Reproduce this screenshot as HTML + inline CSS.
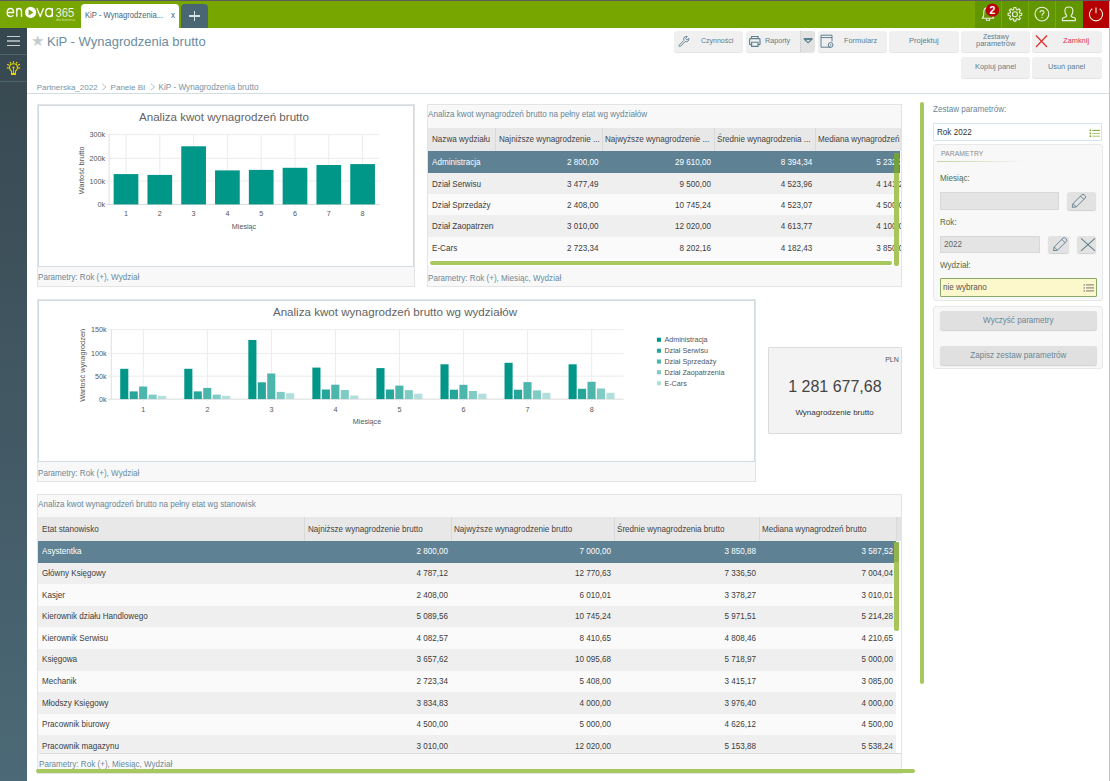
<!DOCTYPE html>
<html><head><meta charset="utf-8">
<style>
*{box-sizing:border-box;margin:0;padding:0}
html,body{width:1110px;height:781px;overflow:hidden;background:#fff;font-family:"Liberation Sans",sans-serif;position:relative}
.a{position:absolute}
.t{position:absolute;white-space:nowrap;line-height:1}
/* top bar */
#topline{left:0;top:0;width:1110px;height:1px;background:#5e5e5e}
#bar{left:0;top:1px;width:1110px;height:27px;background:#78a600}
#icons{left:975px;top:1px;width:108px;height:27px;background:#629600}
.sep{top:1px;width:1px;height:27px;background:#74aa0c}
#power{left:1083px;top:1px;width:26px;height:27px;background:#b50000}
#rline{left:1109px;top:1px;width:1px;height:780px;background:#c4c4c4}
#tab{left:81px;top:4px;width:98px;height:24px;background:#fff;border-radius:4px 4px 0 0}
#plus{left:181px;top:4px;width:27px;height:24px;background:#4b6673;border-radius:4px 4px 0 0}
/* sidebar */
#side{left:0;top:28px;width:27px;height:753px;background:linear-gradient(#37474f,#4c6977)}
.sline{left:0;width:27px;height:1px;background:#4c6470}
/* header */
#title{left:47px;top:35px;font-size:13px;color:#6d8ca0;font-family:"Liberation Sans",sans-serif}
.btn{position:absolute;height:21px;background:#f0f0f0;border-radius:3px;box-shadow:0 1px 0 #e4e4e4;color:#6b8797;font-size:7.4px;white-space:nowrap}
#hline{left:27px;top:93px;width:1082px;height:1px;background:#d3dee2}
.hb{font-size:8px;color:#5f7c8c;transform-origin:0 0}
.crumb{font-size:8px;color:#7b93a2}
</style></head><body>
<div id="topline" class="a"></div>
<div id="bar" class="a"></div>
<div id="icons" class="a"></div>
<div class="a sep" style="left:1001px"></div>
<div class="a sep" style="left:1028px"></div>
<div class="a sep" style="left:1055px"></div>
<div id="power" class="a"></div>
<div id="rline" class="a"></div>
<div id="tab" class="a"></div>
<div id="plus" class="a"></div>
<div id="side" class="a"></div>
<div class="a sline" style="top:54px"></div>
<div class="a sline" style="top:81px"></div>
<div id="hline" class="a"></div>
<!-- logo -->
<svg class="a" style="left:0;top:0" width="80" height="28" viewBox="0 0 80 28">
<g fill="none" stroke="#fff" stroke-width="1.35" stroke-linejoin="round">
<path d="M7.3 12.5 L13.6 12.5 Q13.6 8.5 10.4 8.5 Q7.2 8.5 7.2 12.5 Q7.2 16.5 10.5 16.5 Q12.4 16.5 13.4 15.4"/>
<path d="M16.8 8.2 L16.8 16.8 M16.8 11.4 Q16.8 8.5 19.2 8.5 Q21.5 8.5 21.5 11.4 L21.5 16.8"/>
<path d="M36.9 8.3 L40.2 16.6 L43.5 8.3"/>
<path d="M52.3 8.3 L52.3 16.8 M52.3 12.5 Q52.3 8.5 49 8.5 Q45.7 8.5 45.7 12.5 Q45.7 16.5 49 16.5 Q52.3 16.5 52.3 12.5"/>
</g>
<circle cx="30.6" cy="12.4" r="5.6" fill="#fff"/>
<path d="M28.6 9.2 L33.4 12.4 L28.6 15.6 Z" fill="#78a600"/>
<text x="55.6" y="16.6" font-family="Liberation Sans" font-size="12.2" fill="#fff" stroke="#78a600" stroke-width="0.15" textLength="18.8" lengthAdjust="spacingAndGlyphs">365</text>
<text x="56" y="21" font-family="Liberation Sans" font-size="2.6" fill="#cfe3a0" textLength="19" lengthAdjust="spacingAndGlyphs">dla biznesu</text>
</svg>
<div class="t" style="left:85px;top:11.1px;font-size:9px;color:#4d6272;transform:scaleX(0.85);transform-origin:0 0">KiP - Wynagrodzenia...</div>
<div class="t" style="left:170.6px;top:11.1px;font-size:9px;color:#4d6272;transform:scaleX(0.9);transform-origin:0 0">x</div>
<div class="a" style="left:188.6px;top:15.4px;width:11.2px;height:1.2px;background:#d8e1e5"></div>
<div class="a" style="left:193.6px;top:10.8px;width:1.2px;height:10.4px;background:#d8e1e5"></div>
<!-- top icons -->
<svg class="a" style="left:975px;top:1px" width="134" height="27" viewBox="975 1 134 27" fill="none" stroke="#e8f0dc" stroke-width="1.1">
<path d="M982.2 18.2 Q983.8 16.8 983.8 14 L983.8 12 Q983.8 7.6 988 7.6 Q992.2 7.6 992.2 12 L992.2 14 Q992.2 16.8 993.8 18.2 Z" stroke-linejoin="round"/>
<path d="M986.4 18.4 L986.4 20.3 L989.6 20.3 L989.6 18.4"/>
<circle cx="992.4" cy="10.2" r="6.6" fill="#b9000a" stroke="none"/>
<text x="992.4" y="13.6" font-family="Liberation Sans" font-weight="bold" font-size="10.5" fill="#fff" stroke="none" text-anchor="middle">2</text>
<path d="M1013.52 9.49 L1013.94 7.47 L1015.86 7.47 L1016.28 9.49 L1017.32 9.93 L1019.05 8.79 L1020.41 10.15 L1019.27 11.88 L1019.71 12.92 L1021.73 13.34 L1021.73 15.26 L1019.71 15.68 L1019.27 16.72 L1020.41 18.45 L1019.05 19.81 L1017.32 18.67 L1016.28 19.11 L1015.86 21.13 L1013.94 21.13 L1013.52 19.11 L1012.48 18.67 L1010.75 19.81 L1009.39 18.45 L1010.53 16.72 L1010.09 15.68 L1008.07 15.26 L1008.07 13.34 L1010.09 12.92 L1010.53 11.88 L1009.39 10.15 L1010.75 8.79 L1012.48 9.93 Z" stroke-linejoin="round"/>
<circle cx="1014.9" cy="14.3" r="2.5"/>
<circle cx="1041.9" cy="14.1" r="6.9"/>
<path d="M1040 12.6 Q1040 10.6 1042 10.6 Q1044 10.6 1044 12.3 Q1044 13.4 1042.7 14 Q1042 14.4 1042 15.8" />
<circle cx="1042" cy="17.5" r="0.65" fill="#e8f0dc" stroke="none"/>
<path d="M1066.6 15.4 Q1064.9 13.5 1064.9 10.9 Q1064.9 7 1068.9 7 Q1072.9 7 1072.9 10.9 Q1072.9 13.5 1071.2 15.4 L1071.2 16.5 L1075.4 18.3 L1075.4 20.6 L1062.4 20.6 L1062.4 18.3 L1066.6 16.5 Z" stroke-linejoin="round"/>
<path d="M1092.3 8.8 A6.6 6.6 0 1 0 1099.7 8.8"/>
<path d="M1096 7.5 L1096 13.2"/>
</svg>
<!-- sidebar icons -->
<div class="a" style="left:6.6px;top:36px;width:13.7px;height:1.3px;background:#c9d0d3"></div>
<div class="a" style="left:6.6px;top:40.3px;width:13.7px;height:1.6px;background:#9ea9ae"></div>
<div class="a" style="left:6.6px;top:44.9px;width:13.7px;height:1.3px;background:#c9d0d3"></div>
<svg class="a" style="left:0;top:54px" width="27" height="27" viewBox="0 54 27 27" fill="none" stroke="#e3d400" stroke-width="1.1" stroke-linecap="round">
<path d="M11.6 74.4 L11.6 71.2 Q9.5 69.6 9.5 67.6 Q9.5 63.7 13.5 63.7 Q17.5 63.7 17.5 67.6 Q17.5 69.6 15.4 71.2 L15.4 74.4 Z" stroke-linejoin="round"/>
<circle cx="13.5" cy="67.6" r="1.1" fill="#e3d400" stroke="none"/>
<path d="M13.5 67.6 L13.5 72.6" stroke-width="0.8"/>
<rect x="11.4" y="73" width="4.2" height="1.8" fill="#e8d800" stroke="none"/>
<path d="M13.5 61.5 L13.5 62.3 M10.1 62.3 L10.6 63.1 M16.9 62.3 L16.4 63.1 M7.6 64.5 L8.5 65.1 M19.4 64.5 L18.5 65.1 M7.4 67.9 L8.4 67.9 M19.6 67.9 L18.6 67.9" stroke-width="1.2"/>
</svg>
<!-- title -->
<div class="t" style="left:31px;top:33.6px;font-size:14.5px;color:#c8cbce">&#9733;</div>
<div class="t" id="title">KiP - Wynagrodzenia brutto</div>
<div class="t crumb" style="left:36.7px;top:83.6px">Partnerska_2022</div>
<div class="t crumb" style="left:110.6px;top:83.6px">Panele BI</div>
<div class="t crumb" style="left:158.6px;top:83.6px;font-size:8.2px">KiP - Wynagrodzenia brutto</div>
<svg class="a" style="left:100px;top:82px" width="60" height="10" fill="none" stroke="#9fb0ba" stroke-width="0.8"><path d="M2.2 1.8 L6 5 L2.2 8.2 M50.8 1.8 L54.6 5 L50.8 8.2"/></svg>
<!-- buttons -->
<div class="btn" style="left:674px;top:30.5px;width:69px"></div>
<div class="btn" style="left:746px;top:30.5px;width:69px"></div>
<div class="a" style="left:800px;top:30.5px;width:15px;height:21px;background:#e3e3e3;border-radius:0 3px 3px 0;border-left:1px dotted #c8c8c8"></div>
<div class="btn" style="left:818px;top:30.5px;width:69px"></div>
<div class="btn" style="left:889px;top:30.5px;width:70px"></div>
<div class="btn" style="left:961px;top:30.5px;width:69px"></div>
<div class="btn" style="left:1032px;top:30.5px;width:70px"></div>
<div class="btn" style="left:961px;top:56.8px;width:69px"></div>
<div class="btn" style="left:1032px;top:56.8px;width:70px"></div>
<div class="t hb" style="left:700.7px;top:36.6px;transform:scaleX(0.875)">Czynności</div>
<div class="t hb" style="left:764.7px;top:36.6px;transform:scaleX(0.9)">Raporty</div>
<div class="t hb" style="left:844px;top:36.6px;transform:scaleX(0.92)">Formularz</div>
<div class="t hb" style="left:909.3px;top:36.6px;transform:scaleX(0.95)">Projektuj</div>
<div class="t hb" style="left:982.9px;top:33.3px;transform:scaleX(0.87)">Zestawy</div>
<div class="t hb" style="left:976px;top:39.9px;transform:scaleX(0.93)">parametrów</div>
<div class="t hb" style="left:1062.5px;top:36.6px;transform:scaleX(0.93);color:#e0344e">Zamknij</div>
<div class="t hb" style="left:975px;top:63px;transform:scaleX(0.93)">Kopiuj panel</div>
<div class="t hb" style="left:1048.3px;top:63px;transform:scaleX(0.92)">Usuń panel</div>
<svg class="a" style="left:670px;top:28px" width="440" height="26" viewBox="670 28 440 26" fill="none" stroke="#5f8090" stroke-width="1">
<path transform="translate(683.8 41.4) scale(0.9) translate(-683 -41.2)" d="M678 45.2 L683.2 40 Q682.2 37.6 683.6 36.4 Q684.8 35.4 686.8 35.8 L684.9 37.8 L686.7 39.6 L688.6 37.8 Q688.9 39.8 687.6 40.9 Q686.4 42 684.4 41.4 L679.4 46.6 Q678.4 47.2 677.9 46.7 Q677.4 46 678 45.2 Z" stroke-linejoin="round" stroke-width="1.05"/>
<path d="M751.6 38.6 L751.6 36.5 L758 36.5 L758 38.6 M751.3 44.6 L750.2 44.6 Q749.6 44.6 749.6 44 L749.6 39.4 Q749.6 38.6 750.4 38.6 L759.2 38.6 Q760 38.6 760 39.4 L760 44 Q760 44.6 759.4 44.6 L758.3 44.6 M751.6 42.2 L758 42.2 L758 46.4 L751.6 46.4 Z" stroke-width="1.15"/>
<path d="M803.6 38 L812.6 38 L812.6 39.4 L808.1 43.6 L803.6 39.4 Z" fill="#5f8090" stroke="none"/>
<path d="M805.9 40 L810.3 40 L808.1 42 Z" fill="#d9dfe2" stroke="none"/>
<path d="M831 47.2 L821 47.2 L821 35.2 L832 35.2 L832 41.5 M821 37.6 L832 37.6" />
<circle cx="830.6" cy="45" r="2.4"/><circle cx="830.6" cy="45" r="0.8" fill="#5f8090" stroke="none"/>
<path d="M1036 35.5 L1047 47 M1047 35.5 L1036 47" stroke="#e02e2e" stroke-width="1.2"/>
</svg>

<div class="a" style="left:37px;top:104px;width:378px;height:183px;background:#f8f8f8;border:1px solid #e4e4e4"></div>
<div class="a" style="left:38px;top:105px;width:376px;height:162px;border:1px solid #cfdce2;background:#fff"></div>
<div class="t" style="left:38.4px;top:273.35px;font-size:8.8px;line-height:1;transform:scaleX(0.92);transform-origin:0 0;color:#6b8a9b">Parametry: Rok (+), Wydział</div>
<div class="a" style="left:37px;top:299px;width:719px;height:183px;background:#f8f8f8;border:1px solid #e4e4e4"></div>
<div class="a" style="left:38px;top:300px;width:717px;height:162px;border:1px solid #cfdce2;background:#fff"></div>
<div class="t" style="left:38.4px;top:468.55px;font-size:8.8px;line-height:1;transform:scaleX(0.92);transform-origin:0 0;color:#6b8a9b">Parametry: Rok (+), Wydział</div>
<div class="a" style="left:768px;top:347px;width:134px;height:86.5px;background:#f3f3f3;border:1px solid #dcdcdc;border-radius:1px"></div>
<div class="t" style="left:885.2px;top:355.9px;font-size:7px;color:#555">PLN</div>
<div class="t" style="left:788.2px;top:378.5px;font-size:16px;color:#444">1 281 677,68</div>
<div class="t" style="left:795.4px;top:409px;font-size:8px;color:#333">Wynagrodzenie brutto</div>
<svg class="a" style="left:0;top:0" width="1110" height="781" font-family="Liberation Sans">
<line x1="105.5" y1="134.6" x2="379.5" y2="134.6" stroke="#ececec" stroke-width="1"/>
<line x1="105.5" y1="158.3" x2="379.5" y2="158.3" stroke="#ececec" stroke-width="1"/>
<line x1="105.5" y1="181.1" x2="379.5" y2="181.1" stroke="#ececec" stroke-width="1"/>
<line x1="105.5" y1="204.4" x2="379.5" y2="204.4" stroke="#d9d9d9" stroke-width="1"/>
<line x1="109.1" y1="134.6" x2="109.1" y2="204.4" stroke="#e0e0e0"/>
<line x1="126.00" y1="134.6" x2="126.00" y2="207" stroke="#ececec"/>
<line x1="159.80" y1="134.6" x2="159.80" y2="207" stroke="#ececec"/>
<line x1="193.60" y1="134.6" x2="193.60" y2="207" stroke="#ececec"/>
<line x1="227.40" y1="134.6" x2="227.40" y2="207" stroke="#ececec"/>
<line x1="261.20" y1="134.6" x2="261.20" y2="207" stroke="#ececec"/>
<line x1="295.00" y1="134.6" x2="295.00" y2="207" stroke="#ececec"/>
<line x1="328.80" y1="134.6" x2="328.80" y2="207" stroke="#ececec"/>
<line x1="362.60" y1="134.6" x2="362.60" y2="207" stroke="#ececec"/>
<rect x="113.65" y="174.1" width="24.7" height="30.30" fill="#009688"/>
<text transform="translate(126.00 216.40) scale(0.92 1)" font-size="7.83" fill="#555" text-anchor="middle" >1</text>
<rect x="147.45" y="174.9" width="24.7" height="29.50" fill="#009688"/>
<text transform="translate(159.80 216.40) scale(0.92 1)" font-size="7.83" fill="#555" text-anchor="middle" >2</text>
<rect x="181.25" y="146.3" width="24.7" height="58.10" fill="#009688"/>
<text transform="translate(193.60 216.40) scale(0.92 1)" font-size="7.83" fill="#555" text-anchor="middle" >3</text>
<rect x="215.05" y="170.4" width="24.7" height="34.00" fill="#009688"/>
<text transform="translate(227.40 216.40) scale(0.92 1)" font-size="7.83" fill="#555" text-anchor="middle" >4</text>
<rect x="248.85" y="169.9" width="24.7" height="34.50" fill="#009688"/>
<text transform="translate(261.20 216.40) scale(0.92 1)" font-size="7.83" fill="#555" text-anchor="middle" >5</text>
<rect x="282.65" y="167.8" width="24.7" height="36.60" fill="#009688"/>
<text transform="translate(295.00 216.40) scale(0.92 1)" font-size="7.83" fill="#555" text-anchor="middle" >6</text>
<rect x="316.45" y="165.0" width="24.7" height="39.40" fill="#009688"/>
<text transform="translate(328.80 216.40) scale(0.92 1)" font-size="7.83" fill="#555" text-anchor="middle" >7</text>
<rect x="350.25" y="164.1" width="24.7" height="40.30" fill="#009688"/>
<text transform="translate(362.60 216.40) scale(0.92 1)" font-size="7.83" fill="#555" text-anchor="middle" >8</text>
<text transform="translate(105.20 137.10) scale(0.92 1)" font-size="7.83" fill="#555" text-anchor="end" >300k</text>
<text transform="translate(105.20 160.80) scale(0.92 1)" font-size="7.83" fill="#555" text-anchor="end" >200k</text>
<text transform="translate(105.20 183.60) scale(0.92 1)" font-size="7.83" fill="#555" text-anchor="end" >100k</text>
<text transform="translate(105.20 206.90) scale(0.92 1)" font-size="7.83" fill="#555" text-anchor="end" >0k</text>
<text transform="translate(244.00 229.00) scale(0.92 1)" font-size="7.83" fill="#555" text-anchor="middle" >Miesiąc</text>
<text transform="translate(84.3 170.4) rotate(-90)" font-size="7.4" fill="#555" text-anchor="middle">Wartość brutto</text>
<text transform="translate(139.00 120.80) scale(1.075 1)" font-size="10.79" fill="#636363" text-anchor="start" >Analiza kwot wynagrodzeń brutto</text>
<line x1="107.5" y1="329.7" x2="623.5" y2="329.7" stroke="#ececec"/>
<line x1="107.5" y1="353.5" x2="623.5" y2="353.5" stroke="#ececec"/>
<line x1="107.5" y1="376.2" x2="623.5" y2="376.2" stroke="#ececec"/>
<line x1="107.5" y1="399.1" x2="623.5" y2="399.1" stroke="#d9d9d9"/>
<line x1="111.3" y1="329.7" x2="111.3" y2="399.1" stroke="#e0e0e0"/>
<line x1="143.32" y1="329.7" x2="143.32" y2="401.5" stroke="#ececec"/>
<line x1="207.38" y1="329.7" x2="207.38" y2="401.5" stroke="#ececec"/>
<line x1="271.43" y1="329.7" x2="271.43" y2="401.5" stroke="#ececec"/>
<line x1="335.47" y1="329.7" x2="335.47" y2="401.5" stroke="#ececec"/>
<line x1="399.52" y1="329.7" x2="399.52" y2="401.5" stroke="#ececec"/>
<line x1="463.57" y1="329.7" x2="463.57" y2="401.5" stroke="#ececec"/>
<line x1="527.62" y1="329.7" x2="527.62" y2="401.5" stroke="#ececec"/>
<line x1="591.67" y1="329.7" x2="591.67" y2="401.5" stroke="#ececec"/>
<rect x="120.22" y="368.8" width="8.1" height="30.30" fill="#009688"/>
<rect x="129.67" y="391.4" width="8.1" height="7.70" fill="#26a69a"/>
<rect x="139.12" y="386.5" width="8.1" height="12.60" fill="#4db6ac"/>
<rect x="148.57" y="394.6" width="8.1" height="4.50" fill="#80cbc4"/>
<rect x="158.02" y="395.9" width="8.1" height="3.20" fill="#b2dfdb"/>
<text transform="translate(143.32 411.60) scale(0.92 1)" font-size="7.83" fill="#555" text-anchor="middle" >1</text>
<rect x="184.28" y="368.8" width="8.1" height="30.30" fill="#009688"/>
<rect x="193.72" y="391.4" width="8.1" height="7.70" fill="#26a69a"/>
<rect x="203.18" y="387.9" width="8.1" height="11.20" fill="#4db6ac"/>
<rect x="212.62" y="394.6" width="8.1" height="4.50" fill="#80cbc4"/>
<rect x="222.07" y="395.9" width="8.1" height="3.20" fill="#b2dfdb"/>
<text transform="translate(207.38 411.60) scale(0.92 1)" font-size="7.83" fill="#555" text-anchor="middle" >2</text>
<rect x="248.33" y="340" width="8.1" height="59.10" fill="#009688"/>
<rect x="257.78" y="382.3" width="8.1" height="16.80" fill="#26a69a"/>
<rect x="267.23" y="373.5" width="8.1" height="25.60" fill="#4db6ac"/>
<rect x="276.68" y="391.9" width="8.1" height="7.20" fill="#80cbc4"/>
<rect x="286.12" y="393.2" width="8.1" height="5.90" fill="#b2dfdb"/>
<text transform="translate(271.43 411.60) scale(0.92 1)" font-size="7.83" fill="#555" text-anchor="middle" >3</text>
<rect x="312.37" y="367.6" width="8.1" height="31.50" fill="#009688"/>
<rect x="321.82" y="389.5" width="8.1" height="9.60" fill="#26a69a"/>
<rect x="331.27" y="384.7" width="8.1" height="14.40" fill="#4db6ac"/>
<rect x="340.72" y="390" width="8.1" height="9.10" fill="#80cbc4"/>
<rect x="350.17" y="395.5" width="8.1" height="3.60" fill="#b2dfdb"/>
<text transform="translate(335.47 411.60) scale(0.92 1)" font-size="7.83" fill="#555" text-anchor="middle" >4</text>
<rect x="376.42" y="368.1" width="8.1" height="31.00" fill="#009688"/>
<rect x="385.87" y="389.5" width="8.1" height="9.60" fill="#26a69a"/>
<rect x="395.32" y="385.6" width="8.1" height="13.50" fill="#4db6ac"/>
<rect x="404.77" y="390.1" width="8.1" height="9.00" fill="#80cbc4"/>
<rect x="414.22" y="393.7" width="8.1" height="5.40" fill="#b2dfdb"/>
<text transform="translate(399.52 411.60) scale(0.92 1)" font-size="7.83" fill="#555" text-anchor="middle" >5</text>
<rect x="440.47" y="364.3" width="8.1" height="34.80" fill="#009688"/>
<rect x="449.92" y="389.7" width="8.1" height="9.40" fill="#26a69a"/>
<rect x="459.37" y="384.8" width="8.1" height="14.30" fill="#4db6ac"/>
<rect x="468.82" y="391" width="8.1" height="8.10" fill="#80cbc4"/>
<rect x="478.27" y="393.7" width="8.1" height="5.40" fill="#b2dfdb"/>
<text transform="translate(463.57 411.60) scale(0.92 1)" font-size="7.83" fill="#555" text-anchor="middle" >6</text>
<rect x="504.52" y="362.8" width="8.1" height="36.30" fill="#009688"/>
<rect x="513.98" y="389.7" width="8.1" height="9.40" fill="#26a69a"/>
<rect x="523.42" y="382.1" width="8.1" height="17.00" fill="#4db6ac"/>
<rect x="532.88" y="390.4" width="8.1" height="8.70" fill="#80cbc4"/>
<rect x="542.32" y="392.8" width="8.1" height="6.30" fill="#b2dfdb"/>
<text transform="translate(527.62 411.60) scale(0.92 1)" font-size="7.83" fill="#555" text-anchor="middle" >7</text>
<rect x="568.57" y="364.3" width="8.1" height="34.80" fill="#009688"/>
<rect x="578.02" y="388.8" width="8.1" height="10.30" fill="#26a69a"/>
<rect x="587.47" y="381.8" width="8.1" height="17.30" fill="#4db6ac"/>
<rect x="596.92" y="388.5" width="8.1" height="10.60" fill="#80cbc4"/>
<rect x="606.37" y="392.8" width="8.1" height="6.30" fill="#b2dfdb"/>
<text transform="translate(591.67 411.60) scale(0.92 1)" font-size="7.83" fill="#555" text-anchor="middle" >8</text>
<text transform="translate(106.60 332.20) scale(0.92 1)" font-size="7.83" fill="#555" text-anchor="end" >150k</text>
<text transform="translate(106.60 356.00) scale(0.92 1)" font-size="7.83" fill="#555" text-anchor="end" >100k</text>
<text transform="translate(106.60 378.70) scale(0.92 1)" font-size="7.83" fill="#555" text-anchor="end" >50k</text>
<text transform="translate(106.60 401.60) scale(0.92 1)" font-size="7.83" fill="#555" text-anchor="end" >0k</text>
<text transform="translate(367.00 424.20) scale(0.92 1)" font-size="7.83" fill="#555" text-anchor="middle" >Miesiące</text>
<text transform="translate(85.3 365.3) rotate(-90)" font-size="7.4" fill="#555" text-anchor="middle">Wartość wynagrodzeń</text>
<text transform="translate(272.90 316.20) scale(1.063 1)" font-size="10.91" fill="#636363" text-anchor="start" >Analiza kwot wynagrodzeń brutto wg wydziałów</text>
<rect x="656.9" y="337.70" width="4.1" height="4.1" fill="#009688"/>
<text transform="translate(664.40 342.30) scale(0.92 1)" font-size="7.83" fill="#555" text-anchor="start" >Administracja</text>
<rect x="656.9" y="348.70" width="4.1" height="4.1" fill="#26a69a"/>
<text transform="translate(664.40 353.30) scale(0.92 1)" font-size="7.83" fill="#555" text-anchor="start" >Dział Serwisu</text>
<rect x="656.9" y="359.50" width="4.1" height="4.1" fill="#4db6ac"/>
<text transform="translate(664.40 364.10) scale(0.92 1)" font-size="7.83" fill="#555" text-anchor="start" >Dział Sprzedaży</text>
<rect x="656.9" y="370.20" width="4.1" height="4.1" fill="#80cbc4"/>
<text transform="translate(664.40 374.80) scale(0.92 1)" font-size="7.83" fill="#555" text-anchor="start" >Dział Zaopatrzenia</text>
<rect x="656.9" y="381.20" width="4.1" height="4.1" fill="#b2dfdb"/>
<text transform="translate(664.40 385.80) scale(0.92 1)" font-size="7.83" fill="#555" text-anchor="start" >E-Cars</text>
</svg>
<div class="a" style="left:427px;top:104px;width:475px;height:183px;background:#f8f8f8;border:1px solid #e4e4e4"></div>
<div class="t" style="left:427.80px;top:108.19px;font-size:8.80px;line-height:1.4;color:#6a8696;transform:scaleX(0.92);transform-origin:left 0;">Analiza kwot wynagrodzeń brutto na pełny etat wg wydziałów</div>
<div class="a" style="left:428px;top:128.1px;width:473px;height:137.9px;overflow:hidden;background:#fff"><div class="a" style="left:0;top:0;width:474px;height:22.700000000000017px;background:#e3e3e3"></div><div class="a" style="left:0;top:0;width:472px;height:22.700000000000017px;background:#e8e8e8"></div><div class="a" style="left:67.30px;top:0;width:1px;height:22.700000000000017px;background:#d9d9d9"></div><div class="t" style="left:3.70px;top:4.69px;font-size:8.80px;line-height:1.4;color:#444;transform:scaleX(0.92);transform-origin:left 0;width:68.04px;overflow:hidden">Nazwa wydziału</div><div class="a" style="left:173.60px;top:0;width:1px;height:22.700000000000017px;background:#d9d9d9"></div><div class="t" style="left:70.90px;top:4.69px;font-size:8.80px;line-height:1.4;color:#444;transform:scaleX(0.92);transform-origin:left 0;width:110.54px;overflow:hidden">Najniższe wynagrodzenie ...</div><div class="a" style="left:285.50px;top:0;width:1px;height:22.700000000000017px;background:#d9d9d9"></div><div class="t" style="left:176.90px;top:4.69px;font-size:8.80px;line-height:1.4;color:#444;transform:scaleX(0.92);transform-origin:left 0;width:116.96px;overflow:hidden">Najwyższe wynagrodzenie ...</div><div class="a" style="left:386.70px;top:0;width:1px;height:22.700000000000017px;background:#d9d9d9"></div><div class="t" style="left:289.00px;top:4.69px;font-size:8.80px;line-height:1.4;color:#444;transform:scaleX(0.92);transform-origin:left 0;width:105.11px;overflow:hidden">Średnie wynagrodzenia ...</div><div class="a" style="left:482.30px;top:0;width:1px;height:22.700000000000017px;background:#d9d9d9"></div><div class="t" style="left:389.50px;top:4.69px;font-size:8.80px;line-height:1.4;color:#444;transform:scaleX(0.92);transform-origin:left 0;width:99.78px;overflow:hidden">Mediana wynagrodzeń brutto</div><div class="a" style="left:0;top:22.70px;width:472px;height:22.70px;background:#5e8193"></div><div class="t" style="left:3.70px;top:27.79px;font-size:8.80px;line-height:1.4;color:#fff;transform:scaleX(0.92);transform-origin:left 0;width:66.96px;overflow:hidden">Administracja</div><div class="t" style="left:67.30px;top:27.79px;font-size:8.80px;line-height:1.4;color:#fff;transform:scaleX(0.92);transform-origin:right 0;width:103.4px;text-align:right">2 800,00</div><div class="t" style="left:173.60px;top:27.79px;font-size:8.80px;line-height:1.4;color:#fff;transform:scaleX(0.92);transform-origin:right 0;width:109.0px;text-align:right">29 610,00</div><div class="t" style="left:285.50px;top:27.79px;font-size:8.80px;line-height:1.4;color:#fff;transform:scaleX(0.92);transform-origin:right 0;width:98.3px;text-align:right">8 394,34</div><div class="t" style="left:386.70px;top:27.79px;font-size:8.80px;line-height:1.4;color:#fff;transform:scaleX(0.92);transform-origin:right 0;width:92.7px;text-align:right">5 232,34</div><div class="a" style="left:0;top:45.00px;width:472px;height:21.10px;background:#efefef"></div><div class="t" style="left:3.70px;top:50.09px;font-size:8.80px;line-height:1.4;color:#3c3c3c;transform:scaleX(0.92);transform-origin:left 0;width:66.96px;overflow:hidden">Dział Serwisu</div><div class="t" style="left:67.30px;top:50.09px;font-size:8.80px;line-height:1.4;color:#3c3c3c;transform:scaleX(0.92);transform-origin:right 0;width:103.4px;text-align:right">3 477,49</div><div class="t" style="left:173.60px;top:50.09px;font-size:8.80px;line-height:1.4;color:#3c3c3c;transform:scaleX(0.92);transform-origin:right 0;width:109.0px;text-align:right">9 500,00</div><div class="t" style="left:285.50px;top:50.09px;font-size:8.80px;line-height:1.4;color:#3c3c3c;transform:scaleX(0.92);transform-origin:right 0;width:98.3px;text-align:right">4 523,96</div><div class="t" style="left:386.70px;top:50.09px;font-size:8.80px;line-height:1.4;color:#3c3c3c;transform:scaleX(0.92);transform-origin:right 0;width:92.7px;text-align:right">4 141,25</div><div class="a" style="left:0;top:65.70px;width:472px;height:21.90px;background:#fafafa"></div><div class="t" style="left:3.70px;top:70.79px;font-size:8.80px;line-height:1.4;color:#3c3c3c;transform:scaleX(0.92);transform-origin:left 0;width:66.96px;overflow:hidden">Dział Sprzedaży</div><div class="t" style="left:67.30px;top:70.79px;font-size:8.80px;line-height:1.4;color:#3c3c3c;transform:scaleX(0.92);transform-origin:right 0;width:103.4px;text-align:right">2 408,00</div><div class="t" style="left:173.60px;top:70.79px;font-size:8.80px;line-height:1.4;color:#3c3c3c;transform:scaleX(0.92);transform-origin:right 0;width:109.0px;text-align:right">10 745,24</div><div class="t" style="left:285.50px;top:70.79px;font-size:8.80px;line-height:1.4;color:#3c3c3c;transform:scaleX(0.92);transform-origin:right 0;width:98.3px;text-align:right">4 523,07</div><div class="t" style="left:386.70px;top:70.79px;font-size:8.80px;line-height:1.4;color:#3c3c3c;transform:scaleX(0.92);transform-origin:right 0;width:92.7px;text-align:right">4 500,00</div><div class="a" style="left:0;top:87.20px;width:472px;height:21.90px;background:#efefef"></div><div class="t" style="left:3.70px;top:92.29px;font-size:8.80px;line-height:1.4;color:#3c3c3c;transform:scaleX(0.92);transform-origin:left 0;width:66.96px;overflow:hidden">Dział Zaopatrzenia</div><div class="t" style="left:67.30px;top:92.29px;font-size:8.80px;line-height:1.4;color:#3c3c3c;transform:scaleX(0.92);transform-origin:right 0;width:103.4px;text-align:right">3 010,00</div><div class="t" style="left:173.60px;top:92.29px;font-size:8.80px;line-height:1.4;color:#3c3c3c;transform:scaleX(0.92);transform-origin:right 0;width:109.0px;text-align:right">12 020,00</div><div class="t" style="left:285.50px;top:92.29px;font-size:8.80px;line-height:1.4;color:#3c3c3c;transform:scaleX(0.92);transform-origin:right 0;width:98.3px;text-align:right">4 613,77</div><div class="t" style="left:386.70px;top:92.29px;font-size:8.80px;line-height:1.4;color:#3c3c3c;transform:scaleX(0.92);transform-origin:right 0;width:92.7px;text-align:right">4 100,00</div><div class="a" style="left:0;top:108.70px;width:472px;height:21.90px;background:#fafafa"></div><div class="t" style="left:3.70px;top:113.79px;font-size:8.80px;line-height:1.4;color:#3c3c3c;transform:scaleX(0.92);transform-origin:left 0;width:66.96px;overflow:hidden">E-Cars</div><div class="t" style="left:67.30px;top:113.79px;font-size:8.80px;line-height:1.4;color:#3c3c3c;transform:scaleX(0.92);transform-origin:right 0;width:103.4px;text-align:right">2 723,34</div><div class="t" style="left:173.60px;top:113.79px;font-size:8.80px;line-height:1.4;color:#3c3c3c;transform:scaleX(0.92);transform-origin:right 0;width:109.0px;text-align:right">8 202,16</div><div class="t" style="left:285.50px;top:113.79px;font-size:8.80px;line-height:1.4;color:#3c3c3c;transform:scaleX(0.92);transform-origin:right 0;width:98.3px;text-align:right">4 182,43</div><div class="t" style="left:386.70px;top:113.79px;font-size:8.80px;line-height:1.4;color:#3c3c3c;transform:scaleX(0.92);transform-origin:right 0;width:92.7px;text-align:right">3 850,00</div></div>
<div class="t" style="left:428.30px;top:271.79px;font-size:8.80px;line-height:1.4;color:#6b8a9b;transform:scaleX(0.92);transform-origin:left 0;">Parametry: Rok (+), Miesiąc, Wydział</div>
<div class="a" style="left:430px;top:261.3px;width:461.5px;height:3.4px;background:#a7c85f;border-radius:2px"></div>
<div class="a" style="left:894.3px;top:152.8px;width:4.6px;height:113px;background:#a6c65c;border-radius:2px"></div>
<div class="a" style="left:894.3px;top:152.8px;width:4.6px;height:19.9px;background:#74a03e;border-radius:2px 2px 0 0"></div>
<div class="a" style="left:37px;top:493.5px;width:865px;height:280.5px;background:#f8f8f8;border:1px solid #e4e4e4"></div>
<div class="t" style="left:37.80px;top:498.39px;font-size:8.80px;line-height:1.4;color:#6a8696;transform:scaleX(0.92);transform-origin:left 0;">Analiza kwot wynagrodzeń brutto na pełny etat wg stanowisk</div>
<div class="a" style="left:38px;top:516.9px;width:863px;height:236.60000000000002px;overflow:hidden;background:#fff"><div class="a" style="left:0;top:0;width:864px;height:24.0px;background:#e3e3e3"></div><div class="a" style="left:0;top:0;width:857.5px;height:24.0px;background:#e8e8e8"></div><div class="a" style="left:265.70px;top:0;width:1px;height:24.0px;background:#d9d9d9"></div><div class="t" style="left:4.10px;top:5.79px;font-size:8.80px;line-height:1.4;color:#444;transform:scaleX(0.92);transform-origin:left 0;width:283.26px;overflow:hidden">Etat stanowisko</div><div class="a" style="left:412.70px;top:0;width:1px;height:24.0px;background:#d9d9d9"></div><div class="t" style="left:269.50px;top:5.79px;font-size:8.80px;line-height:1.4;color:#444;transform:scaleX(0.92);transform-origin:left 0;width:154.57px;overflow:hidden">Najniższe wynagrodzenie brutto</div><div class="a" style="left:575.50px;top:0;width:1px;height:24.0px;background:#d9d9d9"></div><div class="t" style="left:416.30px;top:5.79px;font-size:8.80px;line-height:1.4;color:#444;transform:scaleX(0.92);transform-origin:left 0;width:171.96px;overflow:hidden">Najwyższe wynagrodzenie brutto</div><div class="a" style="left:720.50px;top:0;width:1px;height:24.0px;background:#d9d9d9"></div><div class="t" style="left:578.70px;top:5.79px;font-size:8.80px;line-height:1.4;color:#444;transform:scaleX(0.92);transform-origin:left 0;width:153.04px;overflow:hidden">Średnie wynagrodzenia brutto</div><div class="a" style="left:857.50px;top:0;width:1px;height:24.0px;background:#d9d9d9"></div><div class="t" style="left:724.00px;top:5.79px;font-size:8.80px;line-height:1.4;color:#444;transform:scaleX(0.92);transform-origin:left 0;width:144.02px;overflow:hidden">Mediana wynagrodzeń brutto</div><div class="a" style="left:0;top:24.00px;width:857.5px;height:22.02px;background:#5e8193"></div><div class="t" style="left:4.10px;top:28.39px;font-size:8.80px;line-height:1.4;color:#fff;transform:scaleX(0.92);transform-origin:left 0;width:282.17px;overflow:hidden">Asystentka</div><div class="t" style="left:265.70px;top:28.39px;font-size:8.80px;line-height:1.4;color:#fff;transform:scaleX(0.92);transform-origin:right 0;width:144.1px;text-align:right">2 800,00</div><div class="t" style="left:412.70px;top:28.39px;font-size:8.80px;line-height:1.4;color:#fff;transform:scaleX(0.92);transform-origin:right 0;width:159.9px;text-align:right">7 000,00</div><div class="t" style="left:575.50px;top:28.39px;font-size:8.80px;line-height:1.4;color:#fff;transform:scaleX(0.92);transform-origin:right 0;width:142.1px;text-align:right">3 850,88</div><div class="t" style="left:720.50px;top:28.39px;font-size:8.80px;line-height:1.4;color:#fff;transform:scaleX(0.92);transform-origin:right 0;width:134.1px;text-align:right">3 587,52</div><div class="a" style="left:0;top:45.62px;width:857.5px;height:22.02px;background:#efefef"></div><div class="t" style="left:4.10px;top:50.01px;font-size:8.80px;line-height:1.4;color:#3c3c3c;transform:scaleX(0.92);transform-origin:left 0;width:282.17px;overflow:hidden">Główny Księgowy</div><div class="t" style="left:265.70px;top:50.01px;font-size:8.80px;line-height:1.4;color:#3c3c3c;transform:scaleX(0.92);transform-origin:right 0;width:144.1px;text-align:right">4 787,12</div><div class="t" style="left:412.70px;top:50.01px;font-size:8.80px;line-height:1.4;color:#3c3c3c;transform:scaleX(0.92);transform-origin:right 0;width:159.9px;text-align:right">12 770,63</div><div class="t" style="left:575.50px;top:50.01px;font-size:8.80px;line-height:1.4;color:#3c3c3c;transform:scaleX(0.92);transform-origin:right 0;width:142.1px;text-align:right">7 336,50</div><div class="t" style="left:720.50px;top:50.01px;font-size:8.80px;line-height:1.4;color:#3c3c3c;transform:scaleX(0.92);transform-origin:right 0;width:134.1px;text-align:right">7 004,04</div><div class="a" style="left:0;top:67.24px;width:857.5px;height:22.02px;background:#fafafa"></div><div class="t" style="left:4.10px;top:71.63px;font-size:8.80px;line-height:1.4;color:#3c3c3c;transform:scaleX(0.92);transform-origin:left 0;width:282.17px;overflow:hidden">Kasjer</div><div class="t" style="left:265.70px;top:71.63px;font-size:8.80px;line-height:1.4;color:#3c3c3c;transform:scaleX(0.92);transform-origin:right 0;width:144.1px;text-align:right">2 408,00</div><div class="t" style="left:412.70px;top:71.63px;font-size:8.80px;line-height:1.4;color:#3c3c3c;transform:scaleX(0.92);transform-origin:right 0;width:159.9px;text-align:right">6 010,01</div><div class="t" style="left:575.50px;top:71.63px;font-size:8.80px;line-height:1.4;color:#3c3c3c;transform:scaleX(0.92);transform-origin:right 0;width:142.1px;text-align:right">3 378,27</div><div class="t" style="left:720.50px;top:71.63px;font-size:8.80px;line-height:1.4;color:#3c3c3c;transform:scaleX(0.92);transform-origin:right 0;width:134.1px;text-align:right">3 010,01</div><div class="a" style="left:0;top:88.86px;width:857.5px;height:22.02px;background:#efefef"></div><div class="t" style="left:4.10px;top:93.25px;font-size:8.80px;line-height:1.4;color:#3c3c3c;transform:scaleX(0.92);transform-origin:left 0;width:282.17px;overflow:hidden">Kierownik działu Handlowego</div><div class="t" style="left:265.70px;top:93.25px;font-size:8.80px;line-height:1.4;color:#3c3c3c;transform:scaleX(0.92);transform-origin:right 0;width:144.1px;text-align:right">5 089,56</div><div class="t" style="left:412.70px;top:93.25px;font-size:8.80px;line-height:1.4;color:#3c3c3c;transform:scaleX(0.92);transform-origin:right 0;width:159.9px;text-align:right">10 745,24</div><div class="t" style="left:575.50px;top:93.25px;font-size:8.80px;line-height:1.4;color:#3c3c3c;transform:scaleX(0.92);transform-origin:right 0;width:142.1px;text-align:right">5 971,51</div><div class="t" style="left:720.50px;top:93.25px;font-size:8.80px;line-height:1.4;color:#3c3c3c;transform:scaleX(0.92);transform-origin:right 0;width:134.1px;text-align:right">5 214,28</div><div class="a" style="left:0;top:110.48px;width:857.5px;height:22.02px;background:#fafafa"></div><div class="t" style="left:4.10px;top:114.87px;font-size:8.80px;line-height:1.4;color:#3c3c3c;transform:scaleX(0.92);transform-origin:left 0;width:282.17px;overflow:hidden">Kierownik Serwisu</div><div class="t" style="left:265.70px;top:114.87px;font-size:8.80px;line-height:1.4;color:#3c3c3c;transform:scaleX(0.92);transform-origin:right 0;width:144.1px;text-align:right">4 082,57</div><div class="t" style="left:412.70px;top:114.87px;font-size:8.80px;line-height:1.4;color:#3c3c3c;transform:scaleX(0.92);transform-origin:right 0;width:159.9px;text-align:right">8 410,65</div><div class="t" style="left:575.50px;top:114.87px;font-size:8.80px;line-height:1.4;color:#3c3c3c;transform:scaleX(0.92);transform-origin:right 0;width:142.1px;text-align:right">4 808,46</div><div class="t" style="left:720.50px;top:114.87px;font-size:8.80px;line-height:1.4;color:#3c3c3c;transform:scaleX(0.92);transform-origin:right 0;width:134.1px;text-align:right">4 210,65</div><div class="a" style="left:0;top:132.10px;width:857.5px;height:22.02px;background:#efefef"></div><div class="t" style="left:4.10px;top:136.49px;font-size:8.80px;line-height:1.4;color:#3c3c3c;transform:scaleX(0.92);transform-origin:left 0;width:282.17px;overflow:hidden">Księgowa</div><div class="t" style="left:265.70px;top:136.49px;font-size:8.80px;line-height:1.4;color:#3c3c3c;transform:scaleX(0.92);transform-origin:right 0;width:144.1px;text-align:right">3 657,62</div><div class="t" style="left:412.70px;top:136.49px;font-size:8.80px;line-height:1.4;color:#3c3c3c;transform:scaleX(0.92);transform-origin:right 0;width:159.9px;text-align:right">10 095,68</div><div class="t" style="left:575.50px;top:136.49px;font-size:8.80px;line-height:1.4;color:#3c3c3c;transform:scaleX(0.92);transform-origin:right 0;width:142.1px;text-align:right">5 718,97</div><div class="t" style="left:720.50px;top:136.49px;font-size:8.80px;line-height:1.4;color:#3c3c3c;transform:scaleX(0.92);transform-origin:right 0;width:134.1px;text-align:right">5 000,00</div><div class="a" style="left:0;top:153.72px;width:857.5px;height:22.02px;background:#fafafa"></div><div class="t" style="left:4.10px;top:158.11px;font-size:8.80px;line-height:1.4;color:#3c3c3c;transform:scaleX(0.92);transform-origin:left 0;width:282.17px;overflow:hidden">Mechanik</div><div class="t" style="left:265.70px;top:158.11px;font-size:8.80px;line-height:1.4;color:#3c3c3c;transform:scaleX(0.92);transform-origin:right 0;width:144.1px;text-align:right">2 723,34</div><div class="t" style="left:412.70px;top:158.11px;font-size:8.80px;line-height:1.4;color:#3c3c3c;transform:scaleX(0.92);transform-origin:right 0;width:159.9px;text-align:right">5 408,00</div><div class="t" style="left:575.50px;top:158.11px;font-size:8.80px;line-height:1.4;color:#3c3c3c;transform:scaleX(0.92);transform-origin:right 0;width:142.1px;text-align:right">3 415,17</div><div class="t" style="left:720.50px;top:158.11px;font-size:8.80px;line-height:1.4;color:#3c3c3c;transform:scaleX(0.92);transform-origin:right 0;width:134.1px;text-align:right">3 085,00</div><div class="a" style="left:0;top:175.34px;width:857.5px;height:22.02px;background:#efefef"></div><div class="t" style="left:4.10px;top:179.73px;font-size:8.80px;line-height:1.4;color:#3c3c3c;transform:scaleX(0.92);transform-origin:left 0;width:282.17px;overflow:hidden">Młodszy Księgowy</div><div class="t" style="left:265.70px;top:179.73px;font-size:8.80px;line-height:1.4;color:#3c3c3c;transform:scaleX(0.92);transform-origin:right 0;width:144.1px;text-align:right">3 834,83</div><div class="t" style="left:412.70px;top:179.73px;font-size:8.80px;line-height:1.4;color:#3c3c3c;transform:scaleX(0.92);transform-origin:right 0;width:159.9px;text-align:right">4 000,00</div><div class="t" style="left:575.50px;top:179.73px;font-size:8.80px;line-height:1.4;color:#3c3c3c;transform:scaleX(0.92);transform-origin:right 0;width:142.1px;text-align:right">3 976,40</div><div class="t" style="left:720.50px;top:179.73px;font-size:8.80px;line-height:1.4;color:#3c3c3c;transform:scaleX(0.92);transform-origin:right 0;width:134.1px;text-align:right">4 000,00</div><div class="a" style="left:0;top:196.96px;width:857.5px;height:22.02px;background:#fafafa"></div><div class="t" style="left:4.10px;top:201.35px;font-size:8.80px;line-height:1.4;color:#3c3c3c;transform:scaleX(0.92);transform-origin:left 0;width:282.17px;overflow:hidden">Pracownik biurowy</div><div class="t" style="left:265.70px;top:201.35px;font-size:8.80px;line-height:1.4;color:#3c3c3c;transform:scaleX(0.92);transform-origin:right 0;width:144.1px;text-align:right">4 500,00</div><div class="t" style="left:412.70px;top:201.35px;font-size:8.80px;line-height:1.4;color:#3c3c3c;transform:scaleX(0.92);transform-origin:right 0;width:159.9px;text-align:right">5 000,00</div><div class="t" style="left:575.50px;top:201.35px;font-size:8.80px;line-height:1.4;color:#3c3c3c;transform:scaleX(0.92);transform-origin:right 0;width:142.1px;text-align:right">4 626,12</div><div class="t" style="left:720.50px;top:201.35px;font-size:8.80px;line-height:1.4;color:#3c3c3c;transform:scaleX(0.92);transform-origin:right 0;width:134.1px;text-align:right">4 500,00</div><div class="a" style="left:0;top:218.58px;width:857.5px;height:22.02px;background:#efefef"></div><div class="t" style="left:4.10px;top:222.97px;font-size:8.80px;line-height:1.4;color:#3c3c3c;transform:scaleX(0.92);transform-origin:left 0;width:282.17px;overflow:hidden">Pracownik magazynu</div><div class="t" style="left:265.70px;top:222.97px;font-size:8.80px;line-height:1.4;color:#3c3c3c;transform:scaleX(0.92);transform-origin:right 0;width:144.1px;text-align:right">3 010,00</div><div class="t" style="left:412.70px;top:222.97px;font-size:8.80px;line-height:1.4;color:#3c3c3c;transform:scaleX(0.92);transform-origin:right 0;width:159.9px;text-align:right">12 020,00</div><div class="t" style="left:575.50px;top:222.97px;font-size:8.80px;line-height:1.4;color:#3c3c3c;transform:scaleX(0.92);transform-origin:right 0;width:142.1px;text-align:right">5 153,88</div><div class="t" style="left:720.50px;top:222.97px;font-size:8.80px;line-height:1.4;color:#3c3c3c;transform:scaleX(0.92);transform-origin:right 0;width:134.1px;text-align:right">5 538,24</div></div>
<div class="a" style="left:38.5px;top:753px;width:862px;height:1px;background:#dcdcdc"></div>
<div class="t" style="left:38.50px;top:758.39px;font-size:8.80px;line-height:1.4;color:#6b8a9b;transform:scaleX(0.92);transform-origin:left 0;">Parametry: Rok (+), Miesiąc, Wydział</div>
<div class="a" style="left:894.3px;top:541.7px;width:4.4px;height:89px;background:#a6c65c;border-radius:1px 1px 2px 2px"></div>
<div class="a" style="left:894.3px;top:541.7px;width:4.4px;height:20px;background:#8fb34f;border-radius:1px 1px 0 0"></div>
<div class="a" style="left:36px;top:769.2px;width:878.7px;height:3.4px;background:#a7c85f;border-radius:2px"></div>
<div class="a" style="left:920px;top:102px;width:4px;height:582px;background:#a7c85f;border-radius:2px"></div>
<div class="t" style="left:933.30px;top:103.39px;font-size:8.80px;line-height:1.4;color:#6a8696;transform:scaleX(0.92);transform-origin:left 0;">Zestaw parametrów:</div>
<div class="a" style="left:933px;top:123.2px;width:169px;height:17.8px;background:#fff;border:1px solid #d3e6ec"></div>
<div class="t" style="left:937.00px;top:125.89px;font-size:8.80px;line-height:1.4;color:#333;transform:scaleX(0.92);transform-origin:left 0;">Rok 2022</div>
<svg class="a" style="left:1088px;top:128px" width="14" height="11"><g fill="#7aa52a"><rect x="1.6" y="1.6" width="1.6" height="1.6"/><rect x="1.6" y="4.6" width="1.6" height="1.6"/><rect x="1.6" y="7.4" width="1.6" height="1.6"/><rect x="4.3" y="1.9" width="7.7" height="1"/></g><g fill="#a9c66a"><rect x="4.3" y="4.9" width="7.7" height="1"/><rect x="4.3" y="7.7" width="7.7" height="1"/></g></svg>
<div class="a" style="left:932.5px;top:144.4px;width:170px;height:156.6px;background:#f8f8f8;border:1px solid #e8e8e8;border-radius:3px"></div>
<div class="t" style="left:941.00px;top:148.57px;font-size:7.39px;line-height:1.4;color:#8a8a8a;transform:scaleX(0.92);transform-origin:left 0;letter-spacing:0.1px">PARAMETRY</div>
<div class="a" style="left:937px;top:161.3px;width:90px;height:1px;background:linear-gradient(90deg,#c2d6a0,rgba(220,232,200,0))"></div>
<div class="t" style="left:940.30px;top:172.49px;font-size:8.80px;line-height:1.4;color:#4f6a48;transform:scaleX(0.92);transform-origin:left 0;">Miesiąc:</div>
<div class="a" style="left:940px;top:192px;width:119px;height:17.8px;background:#e4e4e4;border:1px solid #d8d8d8"></div>
<div class="a" style="left:1067px;top:192px;width:29px;height:18px;background:#e2e2e2;border-radius:3px;box-shadow:0 1px 1px #cfcfcf"></div>
<div class="t" style="left:940.30px;top:215.79px;font-size:8.80px;line-height:1.4;color:#4f6a48;transform:scaleX(0.92);transform-origin:left 0;">Rok:</div>
<div class="a" style="left:940px;top:236px;width:100px;height:16.6px;background:#e4e4e4;border:1px solid #d8d8d8"></div>
<div class="t" style="left:943.50px;top:237.99px;font-size:8.80px;line-height:1.4;color:#666;transform:scaleX(0.92);transform-origin:left 0;">2022</div>
<div class="a" style="left:1048px;top:236px;width:20.7px;height:17px;background:#e2e2e2;border-radius:3px;box-shadow:0 1px 1px #cfcfcf"></div>
<div class="a" style="left:1077px;top:236px;width:19px;height:17px;background:#e2e2e2;border-radius:3px;box-shadow:0 1px 1px #cfcfcf"></div>
<svg class="a" style="left:1040px;top:190px" width="60" height="66" viewBox="1040 190 60 66" fill="none" stroke="#62808e" stroke-width="1"><path transform="translate(1072 194.2)" d="M0.2 13.1 L1 9.4 L9.9 0.6 Q11 -0.4 12.3 0.8 L13 1.5 Q14.2 2.8 13.2 3.9 L4.3 12.7 Z M8.6 1.9 L11.9 5.2 M1 9.4 L4.3 12.7" stroke-linejoin="round" stroke-width="0.95"/><path transform="translate(1053.2 237.5)" d="M0.2 13.1 L1 9.4 L9.9 0.6 Q11 -0.4 12.3 0.8 L13 1.5 Q14.2 2.8 13.2 3.9 L4.3 12.7 Z M8.6 1.9 L11.9 5.2 M1 9.4 L4.3 12.7" stroke-linejoin="round" stroke-width="0.95"/><path d="M1081 238.3 L1095 250.8 M1095 238.3 L1081 250.8" stroke-width="1.1"/></svg>
<div class="t" style="left:940.30px;top:258.79px;font-size:8.80px;line-height:1.4;color:#4f6a48;transform:scaleX(0.92);transform-origin:left 0;">Wydział:</div>
<div class="a" style="left:939.5px;top:278.3px;width:157.2px;height:19.2px;background:#fdf7cc;border:1px solid #89a86c;border-radius:1px"></div>
<div class="t" style="left:943.00px;top:280.99px;font-size:8.80px;line-height:1.4;color:#555;transform:scaleX(0.92);transform-origin:left 0;">nie wybrano</div>
<svg class="a" style="left:1082px;top:283px" width="14" height="11"><g fill="#777"><rect x="1.6" y="1.3" width="1.3" height="1.3"/><rect x="1.6" y="4.3" width="1.3" height="1.3"/><rect x="1.6" y="7.3" width="1.3" height="1.3"/><rect x="4" y="1.4" width="8" height="1"/><rect x="4" y="4.4" width="8" height="1"/><rect x="4" y="7.4" width="8" height="1"/></g></svg>
<div class="a" style="left:932.5px;top:305.8px;width:170px;height:63px;background:#f8f8f8;border:1px solid #e8e8e8;border-radius:3px"></div>
<div class="a" style="left:940px;top:310.8px;width:156.7px;height:18.9px;background:#e0e0e0;border-radius:3px;box-shadow:0 1px 1px #d0d0d0"></div>
<div class="a" style="left:940px;top:346.3px;width:156.7px;height:18.4px;background:#e0e0e0;border-radius:3px;box-shadow:0 1px 1px #d0d0d0"></div>
<div class="t" style="left:940.00px;top:313.99px;font-size:8.80px;line-height:1.4;color:#6b8797;transform:scaleX(0.92);transform-origin:center 0;width:156.7px;text-align:center">Wyczyść parametry</div>
<div class="t" style="left:940.00px;top:349.19px;font-size:8.80px;line-height:1.4;color:#6b8797;transform:scaleX(0.92);transform-origin:center 0;width:156.7px;text-align:center">Zapisz zestaw parametrów</div>
</body></html>
